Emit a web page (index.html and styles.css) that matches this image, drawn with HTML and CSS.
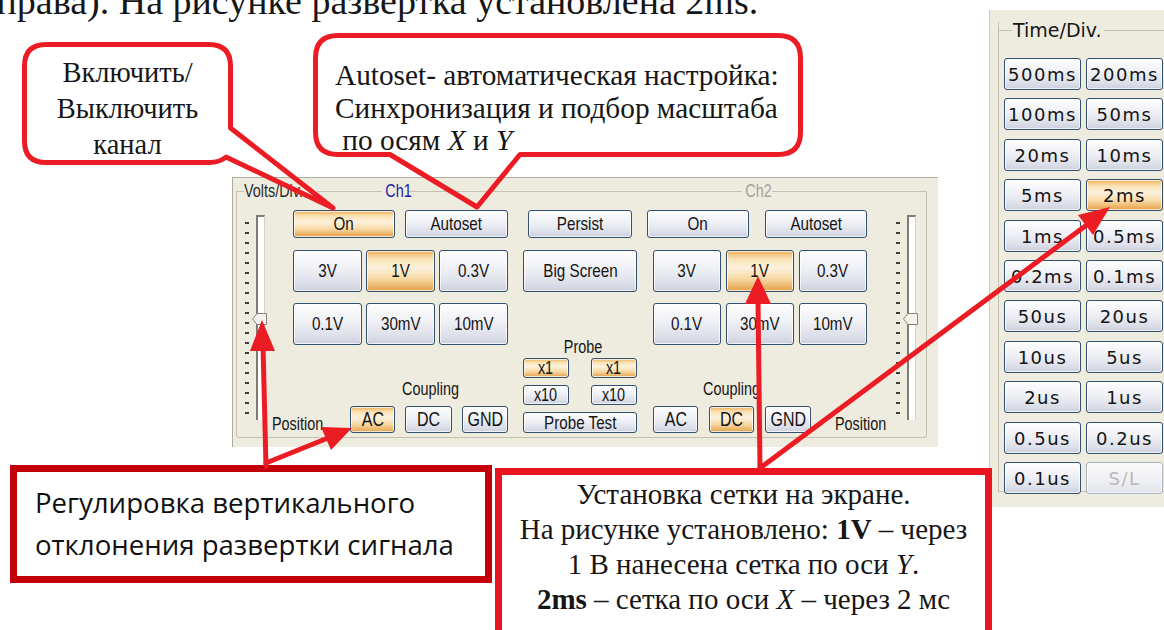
FILE: index.html
```html
<!DOCTYPE html>
<html lang="ru">
<head>
<meta charset="utf-8">
<title>Осциллограф: панель управления</title>
<link rel="stylesheet" href="styles.css">
</head>
<body>
<div class="sheet">
  <p class="lead">(справа). На рисунке развертка установлена 2ms.</p>

  <section class="scope">
    <div class="group">
      <div class="group-head">
        <i class="rule r1"></i><span class="legend lg-volts"><span class="t">Volts/Div.</span></span><i class="rule r2"></i><span class="legend lg-ch1"><span class="t">Ch1</span></span><i class="rule r3"></i><span class="legend lg-ch2"><span class="t">Ch2</span></span><i class="rule r4"></i>
      </div>
      <div class="group-body">
        <div class="slider sl-left">
          <div class="ticks"><i></i><i></i><i></i><i></i><i></i><i></i><i></i><i></i><i></i><i></i><i></i><i></i><i></i><i></i><i></i><i></i><i></i><i></i><i></i><i></i></div>
          <div class="track">
            <svg class="thumb" viewBox="0 0 15 12"><path d="M0.5 6 L5 0.5 H14.5 V11.5 H5 Z" fill="#f3f2ec" stroke="#85847c"/></svg>
          </div>
        </div>

        <div class="chan ch1-col">
          <div class="row-top"><button class="btn on"><span class="t">On</span></button><button class="btn"><span class="t">Autoset</span></button></div>
          <div class="row-volts"><button class="btn"><span class="t">3V</span></button><button class="btn on"><span class="t">1V</span></button><button class="btn"><span class="t">0.3V</span></button></div>
          <div class="row-volts"><button class="btn"><span class="t">0.1V</span></button><button class="btn"><span class="t">30mV</span></button><button class="btn"><span class="t">10mV</span></button></div>
          <div class="cpl-title"><span class="t">Coupling</span></div>
          <div class="cpl-row">
            <span class="pos"><span class="t">Position</span></span>
            <button class="btn cpl w45 on"><span class="t">AC</span></button><button class="btn cpl w47"><span class="t">DC</span></button><button class="btn cpl w46"><span class="t">GND</span></button>
          </div>
        </div>

        <div class="mid">
          <button class="btn persist"><span class="t">Persist</span></button>
          <button class="btn big"><span class="t">Big Screen</span></button>
          <div class="probe-title"><span class="t">Probe</span></div>
          <div class="probe-grid">
            <button class="btn small on"><span class="t">x1</span></button><button class="btn small on"><span class="t">x1</span></button>
            <button class="btn small"><span class="t">x10</span></button><button class="btn small"><span class="t">x10</span></button>
          </div>
          <button class="btn probe-test"><span class="t">Probe Test</span></button>
        </div>

        <div class="chan ch2-col">
          <div class="row-top"><button class="btn"><span class="t">On</span></button><button class="btn"><span class="t">Autoset</span></button></div>
          <div class="row-volts"><button class="btn"><span class="t">3V</span></button><button class="btn on"><span class="t">1V</span></button><button class="btn"><span class="t">0.3V</span></button></div>
          <div class="row-volts"><button class="btn"><span class="t">0.1V</span></button><button class="btn"><span class="t">30mV</span></button><button class="btn"><span class="t">10mV</span></button></div>
          <div class="cpl-title"><span class="t">Coupling</span></div>
          <div class="cpl-row">
            <button class="btn cpl w45"><span class="t">AC</span></button><button class="btn cpl w45 on"><span class="t">DC</span></button><button class="btn cpl w46"><span class="t">GND</span></button>
            <span class="pos"><span class="t">Position</span></span>
          </div>
        </div>

        <div class="slider sl-right">
          <div class="ticks"><i></i><i></i><i></i><i></i><i></i><i></i><i></i><i></i><i></i><i></i><i></i><i></i><i></i><i></i><i></i><i></i><i></i><i></i><i></i><i></i></div>
          <div class="track">
            <svg class="thumb" viewBox="0 0 15 12"><path d="M0.5 6 L5 0.5 H14.5 V11.5 H5 Z" fill="#f3f2ec" stroke="#85847c"/></svg>
          </div>
        </div>
      </div>
    </div>
  </section>

  <section class="timebase">
    <div class="tb-group">
      <div class="group-head">
        <i class="rule t1"></i><span class="legend lg-time">Time/Div.</span><i class="rule r4"></i>
      </div>
      <div class="tb-grid">
        <button class="btn tb">500ms</button><button class="btn tb">200ms</button>
        <button class="btn tb">100ms</button><button class="btn tb">50ms</button>
        <button class="btn tb">20ms</button><button class="btn tb">10ms</button>
        <button class="btn tb">5ms</button><button class="btn tb on">2ms</button>
        <button class="btn tb">1ms</button><button class="btn tb">0.5ms</button>
        <button class="btn tb">0.2ms</button><button class="btn tb">0.1ms</button>
        <button class="btn tb">50us</button><button class="btn tb">20us</button>
        <button class="btn tb">10us</button><button class="btn tb">5us</button>
        <button class="btn tb">2us</button><button class="btn tb">1us</button>
        <button class="btn tb">0.5us</button><button class="btn tb">0.2us</button>
        <button class="btn tb">0.1us</button><button class="btn tb off">S/L</button>
      </div>
    </div>
  </section>

  <div class="note note-pos">Регулировка вертикального<br>отклонения развертки сигнала</div>
  <div class="note note-grid">Установка сетки на экране.<br>На рисунке установлено: <b>1V</b> – через<br>1 В нанесена сетка по оси <i>Y</i>.<br><b>2ms</b> – сетка по оси <i>X</i> – через 2 мс</div>

  <svg class="marks" viewBox="0 0 1164 630" width="1164" height="630">
    <!-- bubble bodies -->
    <g fill="#fff">
      <path d="M46 44.5 H209 Q230.5 44.5 230.5 66 V141 Q230.5 162.5 209 162.5 H46 Q24.5 162.5 24.5 141 V66 Q24.5 44.5 46 44.5 Z"/>
      <path d="M338 35.5 H778 Q800.5 35.5 800.5 58 V132 Q800.5 154.5 778 154.5 H338 Q315.5 154.5 315.5 132 V58 Q315.5 35.5 338 35.5 Z"/>
    </g>
    <!-- bubble outlines with pointers -->
    <g fill="none" stroke="#ec1c24" stroke-width="5" stroke-linejoin="round">
      <path d="M46 44.5 H209 Q230.5 44.5 230.5 66 V128 L333 208 L226 157 Q220 162.5 209 162.5 H46 Q24.5 162.5 24.5 141 V66 Q24.5 44.5 46 44.5 Z"/>
      <path d="M338 35.5 H778 Q800.5 35.5 800.5 58 V132 Q800.5 154.5 778 154.5 H520 L477 207 L390 154.5 H338 Q315.5 154.5 315.5 132 V58 Q315.5 35.5 338 35.5 Z"/>
    </g>
    <!-- arrows -->
    <g stroke="#ec1c24" stroke-width="5" stroke-linecap="round">
      <line x1="266" y1="466" x2="263" y2="346"/>
      <line x1="266" y1="463" x2="328" y2="438"/>
      <line x1="760" y1="468" x2="758" y2="300"/>
      <line x1="760" y1="468" x2="1088" y2="224"/>
    </g>
    <g fill="#ec1c24">
      <polygon points="262,320 250,351 275,351"/>
      <polygon points="352,428 321,427 331,450"/>
      <polygon points="758,276 745,304 771,304"/>
      <polygon points="1110,207 1093,235 1078,215"/>
    </g>
  </svg>

  <div class="callout callout-chan">Включить/<br>Выключить<br>канал</div>
  <div class="callout callout-auto">Autoset- автоматическая настройка:<br>Синхронизация и подбор масштаба<br>&nbsp;по осям <i>X</i> и <i>Y</i></div>
</div>
</body>
</html>
```
FILE: styles.css
```css
* { box-sizing: border-box; }

html, body {
  margin: 0;
  padding: 0;
  background: #fff;
}

body {
  width: 1164px;
  height: 630px;
  overflow: hidden;
  font-family: "Liberation Serif", "Times New Roman", serif;
  color: #161616;
}

.sheet {
  position: relative;
  width: 1164px;
  height: 630px;
  overflow: hidden;
}

/* running text of the page above the figure */
.lead {
  margin: -18px 0 0 -33px;
  font-size: 38px;
  line-height: 38px;
  white-space: nowrap;
}

/* narrow UI lettering */
.t {
  display: inline-block;
  transform: scaleX(0.8);
  white-space: nowrap;
}

/* ---------- oscilloscope vertical panel ---------- */
.scope {
  position: absolute;
  left: 232px;
  top: 177px;
  width: 706px;
  height: 270px;
  z-index: 1;
  background: #eeecdf;
  border-top: 1px solid #aeac9c;
  border-left: 1px solid #aeac9c;
  padding: 13px 11px 9px 3px;
  font-family: "Liberation Sans", Arial, sans-serif;
  color: #151515;
}

.group {
  height: 100%;
  border: 1px solid #c4c1b0;
  border-top: 0;
  border-radius: 0 0 3px 3px;
  display: flex;
  flex-direction: column;
}

.group-head {
  display: flex;
  align-items: center;
  height: 16px;
  margin: -8px -1px 0;
  flex: none;
}

.rule {
  display: block;
  height: 1px;
  background: #c4c1b0;
  flex: none;
}
.r1 { width: 8px; }
.r2 { width: 65px; }
.r3 { width: 334px; }
.r4 { flex: 1; }
.t1 { width: 14px; }

.legend {
  flex: none;
  font-size: 18px;
  line-height: 16px;
  white-space: nowrap;
}
.lg-volts { width: 73px; color: #2a2a2a; }
.lg-volts .t { transform-origin: left center; }
.lg-ch1 { width: 26px; text-align: center; color: #1d1ca6; }
.lg-ch2 { width: 30px; text-align: center; color: #a3a29c; }

.group-body {
  flex: 1;
  display: flex;
  padding-left: 8px;
}

/* position sliders */
.slider {
  flex: none;
  width: 24px;
  display: flex;
}
.sl-right { margin-left: 29px; }

.ticks {
  display: flex;
  flex-direction: column;
  gap: 8px;
  width: 5px;
  margin-top: 23px;
}
.ticks i {
  display: block;
  width: 4px;
  height: 2px;
  background: #3c3c3c;
}

.track {
  position: relative;
  width: 9px;
  height: 205px;
  margin: 16px 0 0 6px;
  background: #fff;
  border-left: 2px solid #7d7c74;
  border-top: 2px solid #7d7c74;
  border-right: 1px solid #d6d3c4;
}
.thumb {
  position: absolute;
  left: -6px;
  top: 96px;
  width: 15px;
  height: 12px;
}

/* buttons */
.btn {
  flex: none;
  display: flex;
  align-items: center;
  justify-content: center;
  margin: 0;
  padding: 0;
  border: 1px solid #33506f;
  border-radius: 3px;
  background: linear-gradient(#fdfdfe, #eff0f5 45%, #dddfe9 80%, #ccd0de);
  box-shadow: inset 0 0 0 1px rgba(255, 255, 255, 0.7);
  font: inherit;
  font-size: 19px;
  color: #141414;
  white-space: nowrap;
  overflow: visible;
}
.btn.on {
  background: linear-gradient(#ecb158, #fae2b6 20%, #fdf1dd 42%, #f8dba7 68%, #e5a048);
}

/* channel columns */
.chan {
  flex: none;
  display: flex;
  flex-direction: column;
  padding-top: 11px;
}
.ch1-col { width: 215px; margin-left: 24px; }
.ch2-col { width: 220px; margin-left: 10px; }

.row-top {
  display: grid;
  height: 28px;
}
.ch1-col .row-top { grid-template-columns: 102px 103px; column-gap: 10px; }
.ch2-col .row-top { grid-template-columns: 102px 102px; column-gap: 16px; }

.row-volts {
  display: grid;
  grid-template-columns: repeat(3, 69px);
  column-gap: 4px;
  height: 42px;
  margin-top: 12px;
}
.row-volts + .row-volts { margin-top: 11px; }
.ch2-col .row-volts {
  grid-template-columns: repeat(3, 68px);
  column-gap: 5px;
  padding-left: 6px;
}

.cpl-title {
  width: 70px;
  margin-top: 36px;
  font-size: 18px;
  line-height: 17px;
  text-align: center;
}
.ch1-col .cpl-title { margin-left: 102px; }
.ch2-col .cpl-title { margin-left: 49px; }

.cpl-row {
  display: flex;
  align-items: flex-end;
  height: 27px;
  margin-top: 8px;
}
.cpl { height: 27px; font-size: 20px; }
.w45 { width: 45px; }
.w46 { width: 46px; }
.w47 { width: 47px; }
.cpl + .cpl { margin-left: 10px; }
.ch2-col .cpl-row { padding-left: 6px; }
.ch2-col .cpl + .cpl { margin-left: 11px; }

.pos {
  flex: none;
  font-size: 18px;
  line-height: 17px;
  white-space: nowrap;
}
.pos .t { transform-origin: left center; }
.ch1-col .pos { margin: 0 auto 0 -21px; }
.ch2-col .pos { margin-left: 24px; }

/* centre column */
.mid {
  flex: none;
  width: 114px;
  margin-left: 15px;
  display: flex;
  flex-direction: column;
  padding-top: 11px;
}
.persist { height: 28px; margin: 0 5px; }
.big { height: 42px; margin-top: 12px; }
.probe-title {
  margin-top: 47px;
  padding-left: 6px;
  font-size: 18px;
  line-height: 17px;
  text-align: center;
}
.probe-grid {
  display: grid;
  grid-template-columns: 46px 46px;
  grid-auto-rows: 20px;
  column-gap: 22px;
  row-gap: 7px;
  margin-top: 2px;
}
.small { font-size: 18px; }
.probe-test { height: 21px; margin-top: 7px; }

/* ---------- time base panel ---------- */
.timebase {
  position: absolute;
  left: 989px;
  top: 10px;
  width: 180px;
  height: 497px;
  z-index: 1;
  background: #eeecdf;
  border-left: 1px solid #cdcaba;
  padding: 20px 0 7px 8px;
  font-family: "DejaVu Sans", Verdana, sans-serif;
  color: #161616;
}
.tb-group {
  height: 100%;
  border: 1px solid #c4c1b0;
  border-top: 0;
  border-right: 0;
}
.lg-time {
  padding: 0 2px 0 1px;
  font-size: 19px;
  line-height: 16px;
}
.tb-grid {
  display: grid;
  grid-template-columns: 77px 77px;
  grid-auto-rows: 32px;
  column-gap: 5px;
  row-gap: 8.4px;
  margin: 20px 0 0 5px;
}
.tb {
  font-family: "DejaVu Sans", Verdana, sans-serif;
  font-size: 18px;
  letter-spacing: 1.5px;
  padding-top: 1px;
}
.tb.off {
  color: #b9b9b9;
  border-color: #a8b3c1;
  background: linear-gradient(#fbfbfc, #eeeff3 60%, #e1e3ea);
}

/* ---------- annotation layer ---------- */
.marks {
  position: absolute;
  left: 0;
  top: 0;
  z-index: 2;
  pointer-events: none;
}

.callout {
  position: absolute;
  z-index: 3;
  white-space: nowrap;
  color: #161616;
}
.callout-chan {
  left: 24px;
  top: 55px;
  width: 207px;
  font-size: 28.5px;
  line-height: 36px;
  text-align: center;
}
.callout-auto {
  left: 335px;
  top: 59px;
  font-size: 29.3px;
  line-height: 32.5px;
}

.note {
  position: absolute;
  z-index: 1;
  background: #fff;
  white-space: nowrap;
}
.note-pos {
  left: 10px;
  top: 465px;
  width: 482px;
  height: 118px;
  border: 7px solid #c40008;
  padding: 9px 0 0 18px;
  font-family: "Open Sans", "Noto Sans", sans-serif;
  font-size: 27.6px;
  line-height: 42px;
  color: #111;
}
.note-grid {
  left: 495px;
  top: 468px;
  width: 497px;
  height: 190px;
  border: 7px solid #ea1520;
  padding-top: 2px;
  text-align: center;
  font-size: 29px;
  line-height: 35px;
}
```
